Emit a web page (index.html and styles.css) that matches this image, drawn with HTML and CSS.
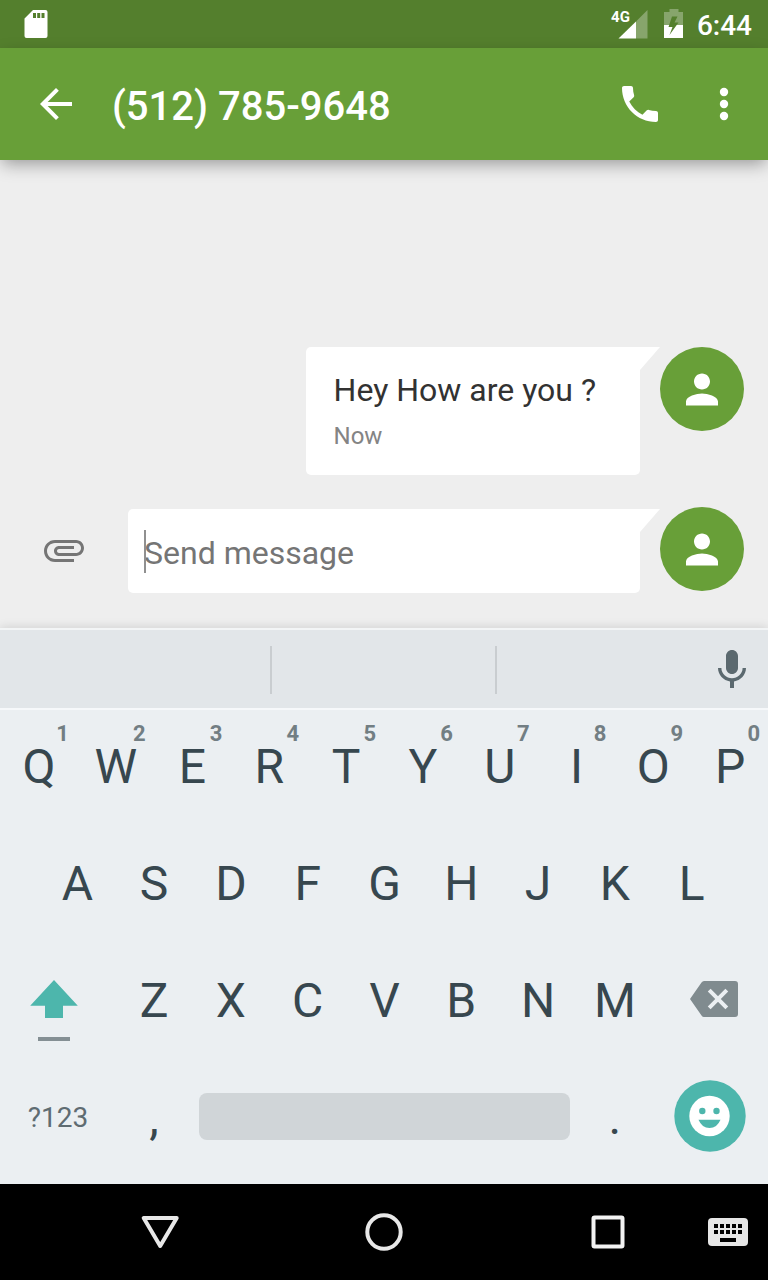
FILE: index.html
```html
<!DOCTYPE html>
<html lang="en">
<head>
<meta charset="utf-8">
<meta name="viewport" content="width=device-width, initial-scale=1">
<title>(512) 785-9648</title>
<link rel="stylesheet" href="styles.css">
</head>
<body>
<div class="status-bar">
  <svg class="icon" width="24" height="28" viewBox="0 0 24 28" role="img" aria-label="SD card"><path fill="#fff" fill-rule="evenodd" d="M9 0H21.500Q23.500 0 23.500 2V26Q23.500 28 21.500 28H2.500Q.5 28 .5 26V8.500ZM9 3V8H12V3ZM13.200 3V8H16.200V3ZM17.500 3V8H20.500V3Z"/></svg>
  <div class="status-right">
    <div class="signal">
      <span class="signal-label">4G</span>
      <svg class="icon" width="30" height="30" viewBox="0 0 30 30" aria-hidden="true"><path fill="#fff" fill-opacity=".3" d="M29.500 1V29.500H18V12.500Z"/><path fill="#fff" d="M18 12.500V29.500H.5Z"/></svg>
    </div>
    <svg class="icon" width="20" height="30" viewBox="0 0 20 30" role="img" aria-label="Battery charging"><path fill="#fff" fill-opacity=".3" d="M5.500 0H14.500V3H19V16H0V3H5.500Z"/><path fill="#fff" d="M0 16H19V29H0Z"/><path fill="#547f2d" d="M13.500 7.500H8L4.500 18H8.500L5.500 26L14.500 13.500H10.500Z"/></svg>
    <time class="clock">6:44</time>
  </div>
</div>

<header class="app-bar">
  <button class="icon-button" aria-label="Back"><svg class="icon" width="48" height="48" viewBox="0 0 24 24"><path fill="currentColor" d="M20 11H7.830l5.590-5.590L12 4l-8 8 8 8 1.410-1.410L7.830 13H20v-2z"/></svg></button>
  <h1 class="title">(512) 785-9648</h1>
  <button class="icon-button" aria-label="Call"><svg class="icon" width="48" height="48" viewBox="0 0 24 24"><path fill="currentColor" d="M6.620 10.790c1.440 2.830 3.760 5.140 6.590 6.590l2.200-2.200c.27-.27.67-.36 1.020-.24 1.120.37 2.330.57 3.570.57.55 0 1 .45 1 1V20c0 .55-.45 1-1 1-9.390 0-17-7.610-17-17 0-.55.45-1 1-1h3.500c.55 0 1 .45 1 1 0 1.250.2 2.450.57 3.570.11.35.03.74-.25 1.020l-2.200 2.200z"/></svg></button>
  <button class="icon-button" aria-label="More options"><svg class="icon" width="48" height="48" viewBox="0 0 24 24"><g fill="currentColor"><circle cx="12" cy="6" r="2.100"/><circle cx="12" cy="12" r="2.100"/><circle cx="12" cy="18" r="2.100"/></g></svg></button>
</header>

<main class="thread">
  <article class="message">
    <div class="bubble tailed">
      <p class="message-text">Hey How are you ?</p>
      <p class="message-time">Now</p>
    </div>
    <span class="avatar"><svg class="icon" width="48" height="48" viewBox="0 0 24 24"><path fill="#fff" d="M12 12.300c2.210 0 4-1.790 4-4s-1.790-4-4-4-4 1.790-4 4 1.790 4 4 4zm0 2c-2.670 0-8 1.340-8 4v2h16v-2c0-2.660-5.330-4-8-4z"/></svg></span>
  </article>
  <form class="compose">
    <button type="button" class="icon-button attach" aria-label="Attach"><svg class="icon" width="48" height="48" viewBox="0 0 24 24"><path fill="currentColor" d="M7.500 18C4.460 18 2 15.540 2 12.500S4.460 7 7.500 7H18c2.210 0 4 1.790 4 4s-1.790 4-4 4H9.500C8.120 15 7 13.880 7 12.500S8.120 10 9.500 10H17v1.500H9.500c-.55 0-1 .45-1 1s.45 1 1 1H18c1.380 0 2.500-1.120 2.500-2.500S19.380 8.500 18 8.500H7.500c-2.210 0-4 1.790-4 4s1.790 4 4 4H17V18H7.500z"/></svg></button>
    <div class="field tailed">
      <input class="field-input" type="text" aria-label="Message" placeholder="Send message">
      <span class="caret"></span>
    </div>
    <span class="avatar"><svg class="icon" width="48" height="48" viewBox="0 0 24 24"><path fill="#fff" d="M12 12.300c2.210 0 4-1.790 4-4s-1.790-4-4-4-4 1.790-4 4 1.790 4 4 4zm0 2c-2.670 0-8 1.340-8 4v2h16v-2c0-2.660-5.330-4-8-4z"/></svg></span>
  </form>
</main>

<section class="keyboard" aria-label="Keyboard">
  <div class="suggestions">
    <span></span><span class="divider"></span><span></span><span class="divider"></span><span></span>
    <button class="icon-button mic" aria-label="Voice input"><svg class="icon" width="48" height="48" viewBox="0 0 24 24"><path fill="currentColor" d="M12 14c1.660 0 3-1.340 3-3V5c0-1.660-1.340-3-3-3S9 3.340 9 5v6c0 1.660 1.340 3 3 3zm5.300-3c0 3-2.540 5.100-5.300 5.100S6.700 14 6.700 11H5c0 3.410 2.720 6.230 6 6.720V21h2v-3.280c3.280-.48 6-3.300 6-6.720h-1.700z"/></svg></button>
  </div>
  <div class="keys">
    <div class="key-row">
      <button class="key">Q<span class="hint">1</span></button><button class="key">W<span class="hint">2</span></button><button class="key">E<span class="hint">3</span></button><button class="key">R<span class="hint">4</span></button><button class="key">T<span class="hint">5</span></button><button class="key">Y<span class="hint">6</span></button><button class="key">U<span class="hint">7</span></button><button class="key">I<span class="hint">8</span></button><button class="key">O<span class="hint">9</span></button><button class="key">P<span class="hint">0</span></button>
    </div>
    <div class="key-row key-row-inset">
      <button class="key">A</button><button class="key">S</button><button class="key">D</button><button class="key">F</button><button class="key">G</button><button class="key">H</button><button class="key">J</button><button class="key">K</button><button class="key">L</button>
    </div>
    <div class="key-row">
      <button class="key key-wide key-shift" aria-label="Shift"><svg class="icon" width="48" height="64" viewBox="0 0 48 64"><path fill="#4db6ac" d="M24 2L47.800 27.700H33V40H15V27.700H.2Z"/><path fill="#848f94" d="M8 59H40V63H8Z"/></svg></button>
      <button class="key">Z</button><button class="key">X</button><button class="key">C</button><button class="key">V</button><button class="key">B</button><button class="key">N</button><button class="key">M</button>
      <button class="key key-wide key-delete" aria-label="Delete"><svg class="icon" width="48" height="36" viewBox="0 0 48 36"><path fill="#808b8f" d="M14 0H45Q48 0 48 3V33Q48 36 45 36H14Q12.500 36 11.500 34.500L0 18L11.500 1.500Q12.500 0 14 0Z"/><path fill="none" stroke="#ebeff2" stroke-width="4" d="M19.200 9.200L36.800 26.800M36.800 9.200L19.200 26.800"/></svg></button>
    </div>
    <div class="key-row">
      <button class="key key-wide key-symbols">?123</button>
      <button class="key">,</button>
      <button class="key key-space" aria-label="Space"><span class="space-bar"></span></button>
      <button class="key">.</button>
      <button class="key key-wide key-emoji" aria-label="Emoji"><svg class="icon" width="72" height="72" viewBox="0 0 72 72"><circle cx="36" cy="36" r="35.700" fill="#4db6ac"/><circle cx="35.500" cy="36" r="20.200" fill="#fff"/><g fill="#4db6ac"><circle cx="28.300" cy="31" r="3.200"/><circle cx="42.500" cy="31" r="3.200"/><path d="M24.500 39.700H46.500Q43 48 35.500 48T24.500 39.700Z"/></g></svg></button>
    </div>
  </div>
</section>

<nav class="nav-bar" aria-label="System">
  <button class="nav-button nav-back" aria-label="Back"><svg class="icon" width="40" height="40" viewBox="0 0 40 40"><path fill="none" stroke="#e8e8e8" stroke-width="4" stroke-linejoin="round" d="M3.700 6H36.700L20.200 34Z"/></svg></button>
  <button class="nav-button nav-home" aria-label="Home"><svg class="icon" width="40" height="40" viewBox="0 0 40 40"><circle cx="20" cy="20" r="16.700" fill="none" stroke="#e8e8e8" stroke-width="4"/></svg></button>
  <button class="nav-button nav-recents" aria-label="Recent apps"><svg class="icon" width="40" height="40" viewBox="0 0 40 40"><rect x="5.500" y="5.500" width="29" height="29" rx="1" fill="none" stroke="#f2f2f2" stroke-width="4"/></svg></button>
  <button class="nav-button nav-ime" aria-label="Switch keyboard"><svg class="icon" width="40" height="28" viewBox="0 0 40 28"><rect width="40" height="28" rx="4" fill="#e6e6e6"/><path d="M6 6h4v4H6zM12 6h4v4h-4zM18 6h4v4h-4zM24 6h4v4h-4zM30 6h4v4h-4zM6 12h4v4H6zM12 12h4v4h-4zM18 12h4v4h-4zM24 12h4v4h-4zM30 12h4v4h-4zM12 20h16v4H12z"/></svg></button>
</nav>
</body>
</html>
```
FILE: styles.css
```css
* {
  box-sizing: border-box;
}

body {
  margin: 0;
  min-height: 100vh;
  display: flex;
  flex-direction: column;
  background: #eeeeee;
  font-family: Roboto, "Noto Sans", sans-serif;
}

button {
  margin: 0;
  padding: 0;
  border: 0;
  background: none;
  color: inherit;
  font: inherit;
}

.icon {
  display: block;
  flex: none;
}

/* Status bar */

.status-bar {
  display: flex;
  align-items: center;
  justify-content: space-between;
  height: 48px;
  padding: 0 16px 0 24px;
  background: #547f2d;
  color: #fff;
}

.status-right {
  display: flex;
  align-items: center;
  gap: 16px;
}

.signal {
  position: relative;
}

.signal-label {
  position: absolute;
  top: 0;
  right: 18px;
  font-size: 15px;
  line-height: 16px;
  font-weight: 700;
}

.clock {
  margin-left: -3px;
  padding-top: 4px;
  font-size: 28px;
  line-height: 32px;
  font-weight: 500;
}

/* App bar */

.app-bar {
  position: relative;
  display: flex;
  align-items: center;
  gap: 32px;
  height: 112px;
  padding: 0 20px 0 32px;
  background: #689f38;
  box-shadow: 0 6px 16px -2px rgba(0, 0, 0, 0.36);
  color: #fff;
}

.title {
  flex: 1;
  margin: 0;
  padding-top: 6px;
  font-size: 40px;
  line-height: 48px;
  font-weight: 500;
}

.app-bar .icon-button:last-child {
  margin-left: 4px;
}

.icon-button {
  display: flex;
  align-items: center;
  justify-content: center;
  flex: none;
}

/* Conversation */

.thread {
  flex: 1;
  display: flex;
  flex-direction: column;
  justify-content: flex-end;
  gap: 32px;
  padding: 32px 24px 35px 40px;
}

.message,
.compose {
  display: flex;
  align-items: flex-start;
}

.message {
  justify-content: flex-end;
  gap: 20px;
}

.bubble,
.field {
  position: relative;
  background: #fff;
  border-radius: 5px 0 5px 5px;
}

.bubble {
  padding: 23px 44px 25px 28px;
}

.tailed::after {
  content: "";
  position: absolute;
  top: 0;
  left: 100%;
  width: 20px;
  height: 23px;
  background: #fff;
  clip-path: polygon(0 0, 100% 0, 0 100%);
}

.message-text,
.message-time {
  margin: 0;
}

.message-text {
  margin-bottom: 12px;
  font-size: 32px;
  line-height: 40px;
  color: #323232;
}

.message-time {
  font-size: 24px;
  line-height: 28px;
  color: #848484;
}

.avatar {
  display: flex;
  align-items: center;
  justify-content: center;
  flex: none;
  width: 84px;
  height: 84px;
  border-radius: 50%;
  background: #689f38;
}

.compose {
  gap: 20px;
}

.attach {
  height: 86px;
  margin-right: 20px;
  color: #757575;
}

.field {
  flex: 1;
  margin-top: 2px;
}

.field-input {
  display: block;
  width: 100%;
  height: 84px;
  padding: 4px 16px 0;
  border: 0;
  outline: 0;
  background: none;
  font: 32px/40px Roboto, "Noto Sans", sans-serif;
  color: #323232;
}

.field-input::placeholder {
  color: #757575;
  opacity: 1;
}

.caret {
  position: absolute;
  top: 21px;
  left: 16px;
  width: 2px;
  height: 43px;
  background: #909090;
}

/* Keyboard */

.keyboard {
  border-top: 2px solid #f3f5f6;
  background: #ebeff2;
  box-shadow: 0 0 10px rgba(0, 0, 0, 0.14);
  color: #37474f;
}

.suggestions {
  display: grid;
  grid-template-columns: 270fr 2px 223fr 2px 199fr 72px;
  align-items: center;
  height: 80px;
  padding-top: 2px;
  border-bottom: 2px solid #f6f8fa;
  background: #e2e6e9;
}

.divider {
  height: 48px;
  background: #c9cdd0;
}

.mic {
  color: #5b696f;
}

.keys {
  padding-bottom: 6px;
}

.key-row {
  display: grid;
  grid-template-columns: repeat(20, 1fr);
  grid-auto-rows: 117px;
}

.key {
  position: relative;
  display: flex;
  align-items: center;
  justify-content: center;
  grid-column: span 2;
  min-width: 0;
  padding: 0 0 4px 1px;
  font-size: 48px;
  line-height: 56px;
}

.key-row-inset .key:first-child {
  grid-column: 2 / span 2;
}

.key-wide {
  grid-column: span 3;
}

.hint {
  position: absolute;
  top: 12px;
  right: 8px;
  font-size: 22px;
  line-height: 24px;
  font-weight: 700;
  color: #727e83;
}

.key-shift {
  padding: 14px 8px 0 0;
}

.key-delete {
  padding: 0 0 8px 8px;
}

.key-symbols {
  font-size: 28px;
  line-height: 32px;
  color: #5f6c72;
}

.key-space {
  grid-column: span 10;
  padding: 0 6px 6px 7px;
}

.space-bar {
  flex: 1;
  height: 47px;
  border-radius: 8px;
  background: #d0d5d8;
}

.key-emoji {
  padding: 0 0 8px;
}

/* System navigation */

.nav-bar {
  position: relative;
  display: grid;
  grid-template-columns: 120fr 80px 144fr 80px 144fr 80px 40fr 80px;
  height: 96px;
  background: #000;
}

.nav-button {
  display: flex;
  align-items: center;
  justify-content: center;
}

.nav-back {
  grid-column: 2;
}

.nav-home {
  grid-column: 4;
}

.nav-recents {
  grid-column: 6;
}

.nav-ime {
  grid-column: 8;
}
```
